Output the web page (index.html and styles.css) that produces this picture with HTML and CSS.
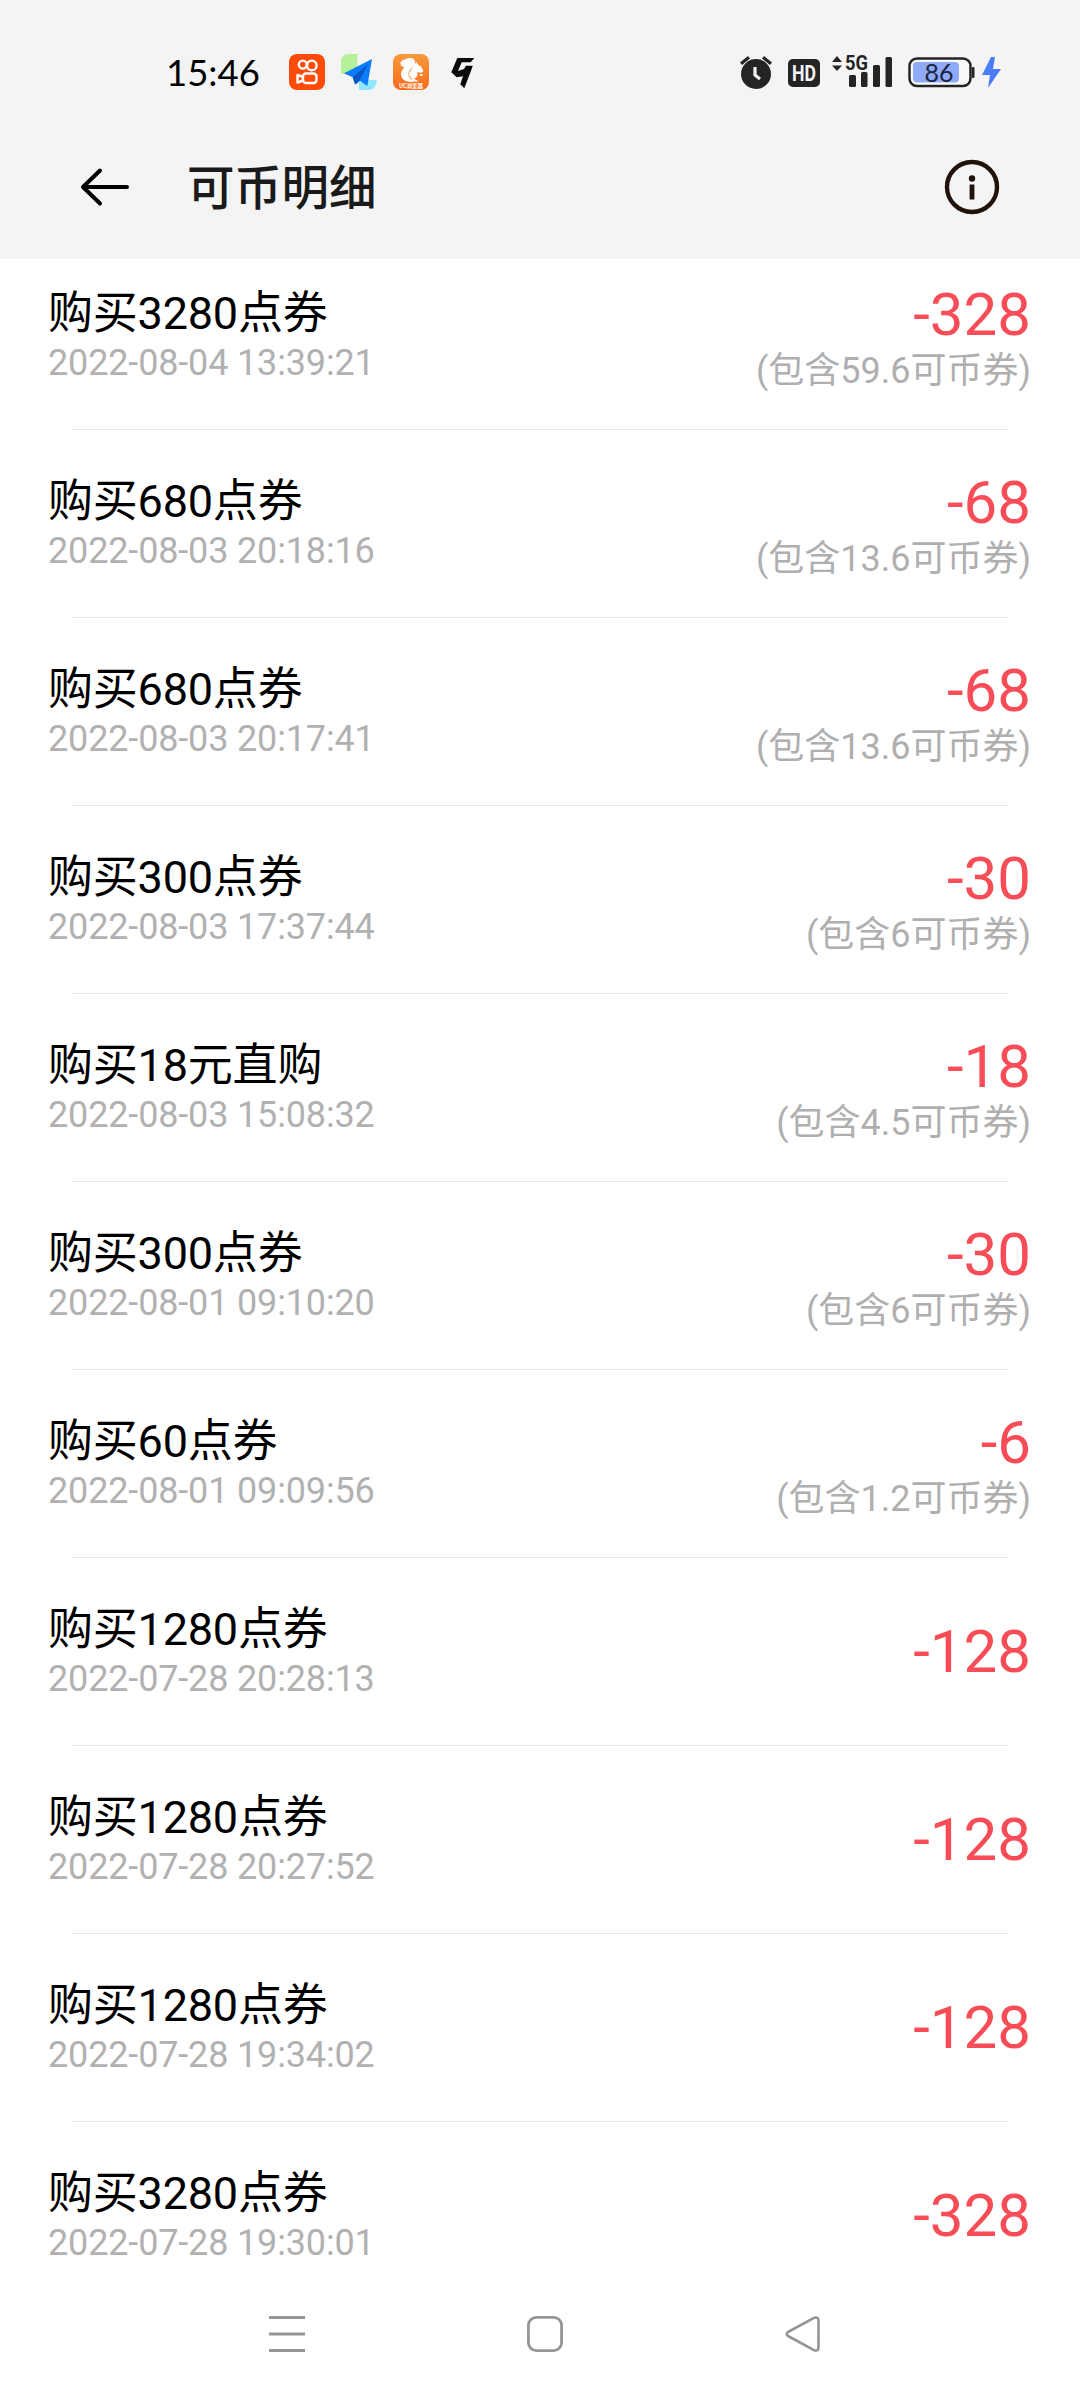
FILE: index.html
```html
<!DOCTYPE html>
<html lang="zh-CN">
<head>
<meta charset="utf-8">
<title>可币明细</title>
<link rel="stylesheet" href="styles.css">
</head>
<body>
<div class="screen">
  <header class="top">
    <div class="status">
      <span class="clock">15:46</span>
      <svg class="apps" width="186" height="40" viewBox="0 0 186 40">
        <defs>
          <linearGradient id="uc" x1="0" y1="0" x2="0" y2="1"><stop offset="0" stop-color="#f79a3c"/><stop offset="1" stop-color="#fa6a1c"/></linearGradient>
        </defs>
        <rect x="0" y="2" width="36" height="36" rx="8" fill="#ff4b06"/>
        <g fill="none" stroke="#fff" stroke-width="2.4" stroke-linejoin="round">
          <circle cx="13.8" cy="12.600" r="4"/><circle cx="22.800" cy="13.400" r="4.800"/>
          <rect x="14" y="21.500" width="13.500" height="9.500" rx="3"/>
          <path d="M14 25l-5.500-2v7.500l5.500-2"/>
        </g>
        <path d="M52 22V10q0-8 8-8h8.500v20z" fill="#b5f09a"/>
        <path d="M70 38V28h18q-1 10-9 10z" fill="#8fe6ff"/>
        <path d="M83 7L55 21.300l8.700 4L67 32.300l4-3.500 7.300 5.200z" fill="#0a7cf5"/>
        <path d="M79 12L63.700 25.300 66 32.500l4.500-4z" fill="#0756c8"/>
        <rect x="104" y="2" width="36" height="36" rx="8" fill="url(#uc)"/>
        <path d="M121 6c4 0 6 3 5 6-1 3-6 5-6.500 9.500-.3 4 2.500 6 5.500 8-7 1.500-13-1.500-13-7.500 0-3 2-5 3.500-7-2 0-4-1-4-3.500 0-3 3-3.500 4.500-4 1-1 3-1.500 5-1.500z" fill="#fff"/>
        <path d="M121.500 18.500L127.500 10l1.700 3c3 1 5 4 5 6.500-1.500 1.500-4 1.500-6.500.5z" fill="#fff"/>
        <circle cx="124.300" cy="22.300" r="4.200" fill="#fff"/>
        <path d="M122 25l8 4.500h-7zM131 22h2.500v2H131z" fill="#fff"/>
        <text x="122" y="36" class="uc-label" text-anchor="middle">UC浏览器</text>
        <path d="M168.300 6h17l-3.600 4.300h-9L169 19l6-2 2-3.300h6.800l-1.500 4.300-7 18.300-4-4 2.700-8-6.300 1-5.400-5z" fill="#0b0b0b"/>
      </svg>
      <svg class="system" width="270" height="40" viewBox="0 0 270 40">
        <g fill="#242424">
          <circle cx="16" cy="22" r="15"/>
          <path d="M0 10.500L8 4l2 2.500L2 13zM32 10.500L24 4l-2 2.500L30 13z"/>
          <rect x="48" y="7" width="32" height="28" rx="5"/>
          <path d="M92 10l5-6 5 6zM92 13.500h10l-5 5.500z"/>
          <rect x="109" y="23" width="7" height="12" rx="1.500"/>
          <rect x="121" y="20" width="6.500" height="15" rx="1.500"/>
          <rect x="133" y="13" width="7" height="22" rx="1.500"/>
          <rect x="145.500" y="5" width="6.500" height="30" rx="1.500"/>
          <rect x="232" y="15" width="2.500" height="11" rx="1"/>
        </g>
        <path d="M15 15v8l5 4" fill="none" stroke="#f4f4f4" stroke-width="3.200"/>
        <text x="64" y="29" class="hd" text-anchor="middle" textLength="24" lengthAdjust="spacingAndGlyphs">HD</text>
        <text x="105" y="18" class="g5" textLength="23" lengthAdjust="spacingAndGlyphs">5G</text>
        <rect x="169.500" y="6.500" width="61" height="27.500" rx="7.500" fill="#fafafa" stroke="#242424" stroke-width="2.500"/>
        <rect x="173" y="10" width="46" height="20.500" rx="4" fill="#8eaaf8"/>
        <text x="199" y="29.500" class="pct" text-anchor="middle">86</text>
        <path d="M251 5L242 23h8l-2 13 13-19h-8l2-12z" fill="#4a7cf8"/>
      </svg>
    </div>
    <div class="bar">
      <svg class="back" width="50" height="40" viewBox="0 0 50 40" fill="none" stroke="#000" stroke-width="4" stroke-linecap="round" stroke-linejoin="round"><path d="M47 20H3M20 3.500L3 20l17 16.500"/></svg>
      <h1 class="heading">可币明细</h1>
      <svg class="info" width="56" height="56" viewBox="0 0 56 56"><circle cx="28" cy="28" r="25" fill="none" stroke="#20130b" stroke-width="4.400"/><circle cx="28" cy="19.500" r="3.200" fill="#20130b"/><rect x="25.600" y="25.500" width="4.800" height="15" fill="#20130b"/></svg>
    </div>
  </header>
  <main class="list">
    <section class="row"><div class="item"><div class="name">购买3280点券</div><div class="time">2022-08-04 13:39:21</div></div><div class="cost"><div class="amount">-328</div><div class="note">(包含59.6可币券)</div></div></section>
    <section class="row"><div class="item"><div class="name">购买680点券</div><div class="time">2022-08-03 20:18:16</div></div><div class="cost"><div class="amount">-68</div><div class="note">(包含13.6可币券)</div></div></section>
    <section class="row"><div class="item"><div class="name">购买680点券</div><div class="time">2022-08-03 20:17:41</div></div><div class="cost"><div class="amount">-68</div><div class="note">(包含13.6可币券)</div></div></section>
    <section class="row"><div class="item"><div class="name">购买300点券</div><div class="time">2022-08-03 17:37:44</div></div><div class="cost"><div class="amount">-30</div><div class="note">(包含6可币券)</div></div></section>
    <section class="row"><div class="item"><div class="name">购买18元直购</div><div class="time">2022-08-03 15:08:32</div></div><div class="cost"><div class="amount">-18</div><div class="note">(包含4.5可币券)</div></div></section>
    <section class="row"><div class="item"><div class="name">购买300点券</div><div class="time">2022-08-01 09:10:20</div></div><div class="cost"><div class="amount">-30</div><div class="note">(包含6可币券)</div></div></section>
    <section class="row"><div class="item"><div class="name">购买60点券</div><div class="time">2022-08-01 09:09:56</div></div><div class="cost"><div class="amount">-6</div><div class="note">(包含1.2可币券)</div></div></section>
    <section class="row"><div class="item"><div class="name">购买1280点券</div><div class="time">2022-07-28 20:28:13</div></div><div class="cost plain"><div class="amount">-128</div></div></section>
    <section class="row"><div class="item"><div class="name">购买1280点券</div><div class="time">2022-07-28 20:27:52</div></div><div class="cost plain"><div class="amount">-128</div></div></section>
    <section class="row"><div class="item"><div class="name">购买1280点券</div><div class="time">2022-07-28 19:34:02</div></div><div class="cost plain"><div class="amount">-128</div></div></section>
    <section class="row"><div class="item"><div class="name">购买3280点券</div><div class="time">2022-07-28 19:30:01</div></div><div class="cost plain"><div class="amount">-328</div></div></section>
  </main>
  <nav class="nav">
    <svg width="36" height="36" viewBox="0 0 36 36"><path d="M0 1.500h36M0 18h36M0 34.500h36" stroke="#959595" stroke-width="3"/></svg>
    <svg width="36" height="36" viewBox="0 0 36 36"><rect x="1.400" y="1.400" width="33.200" height="33.200" rx="8" fill="none" stroke="#959595" stroke-width="2.800"/></svg>
    <svg width="36" height="36" viewBox="0 0 36 36"><path d="M3 16L29 1.800q4.500-1.500 4.500 3v26.400q0 4.500-4.500 3L3 20q-2.500-2 0-4z" fill="none" stroke="#959595" stroke-width="2.600" stroke-linejoin="round"/></svg>
  </nav>
</div>
</body>
</html>
```
FILE: styles.css
```css
* { box-sizing: border-box; }
body { margin: 0; background: #fff; font-family: Roboto, "Noto Sans CJK SC", sans-serif; }
svg { display: block; flex: none; }
.screen { width: 1080px; height: 2400px; display: flex; flex-direction: column; overflow: hidden; background: #fff; }
.top { height: 259px; flex: none; background: #f4f4f4; }
.status { height: 130px; padding: 52px 70px 0 166px; display: flex; }
.clock { width: 123px; font: 36.5px/40px Lato, sans-serif; color: #000; white-space: nowrap; }
.system { margin-left: auto; }
.uc-label { font: 700 5.5px "Noto Sans CJK SC", sans-serif; fill: #fff; }
.hd { font: 700 22px Roboto, sans-serif; fill: #f4f4f4; }
.g5 { font: 700 21px Roboto, sans-serif; fill: #242424; }
.pct { font: 25px Lato, sans-serif; fill: #1c2440; }
.bar { height: 114px; padding: 0 80px; display: flex; align-items: center; }
.heading { margin: 0 auto 0 57px; padding-bottom: 4px; font: 500 47.5px/60px "Noto Sans CJK SC", sans-serif; letter-spacing: -0.2px; color: #1a1a1a; }
.list { height: 2013px; flex: none; overflow: hidden; }
.row { height: 188px; padding: 46px 49px 0 48px; display: flex; justify-content: space-between; background: linear-gradient(#e7e7e7, #e7e7e7) 72px 187px / 936px 1px no-repeat; }
.row:first-child { margin-top: -17px; }
.row:last-child { background: none; }
.name { font-size: 45px; line-height: 52px; letter-spacing: -0.2px; color: #000; }
.time { font-size: 36px; line-height: 47px; letter-spacing: -0.15px; color: #b1b1b1; }
.cost { margin-top: -3px; text-align: right; }
.plain { margin-top: 18px; }
.amount { font-size: 60px; line-height: 60px; color: #f84c56; }
.note { font-size: 36px; line-height: 52px; color: #afafaf; }
.nav { height: 128px; padding: 44px 259px 0 269px; display: flex; justify-content: space-between; }
```
